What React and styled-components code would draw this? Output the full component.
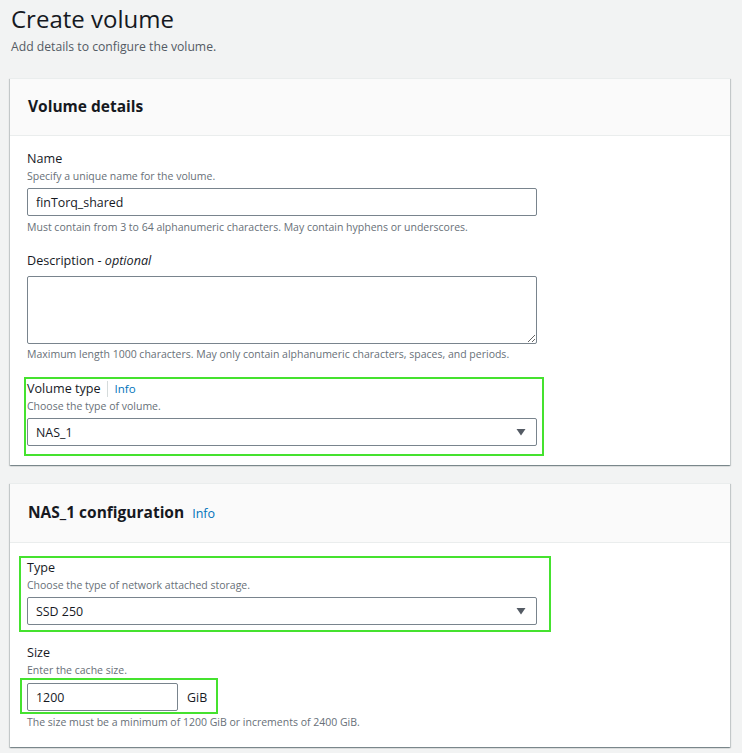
import React from "react";
import styled, { createGlobalStyle } from "styled-components";

const GlobalStyle = createGlobalStyle`
  html, body {
    margin: 0;
    padding: 0;
    background: #f2f3f3;
    font-family: "Open Sans", "Noto Sans", sans-serif;
    color: #16191f;
  }
  * { box-sizing: border-box; }
`;

const Page = styled.div`
  padding: 2px 12px 10px 10px;
`;

const Title = styled.h1`
  margin: 0 0 0 1px;
  font-size: 24px;
  font-weight: 400;
  line-height: 34px;
  color: #16191f;
`;

const Subtitle = styled.p`
  margin: 1px 0 0 1px;
  font-size: 12.2px;
  line-height: 20px;
  color: #545b64;
`;

const Card = styled.section`
  margin-top: ${(p) => p.$top || 0}px;
  background: #fff;
  border-top: 1px solid #eaeded;
  box-shadow: 0 1px 1px 0 rgba(0, 28, 36, 0.3),
    1px 1px 1px 0 rgba(0, 28, 36, 0.15), -1px 1px 1px 0 rgba(0, 28, 36, 0.15);
`;

const CardHeader = styled.header`
  display: flex;
  align-items: baseline;
  gap: 8px;
  height: ${(p) => p.$height || 57}px;
  padding: ${(p) => (p.$height ? 17 : 16)}px 18px 0;
  background: #fafafa;
  border-bottom: 1px solid #eaeded;
`;

const CardTitle = styled.h2`
  margin: 0;
  font-size: 15.5px;
  font-weight: 700;
  line-height: 22px;
`;

const CardBody = styled.div`
  display: flex;
  flex-direction: column;
  gap: ${(p) => p.$gap}px;
  padding: ${(p) => p.$pad};
`;

const Field = styled.div`
  display: flex;
  flex-direction: column;
`;

const Highlight = styled.div`
  align-self: flex-start;
  width: ${(p) => (p.$width ? `${p.$width}px` : "auto")};
  margin: ${(p) => p.$margin};
  padding: ${(p) => p.$padding};
  border: 2px solid #45e22f;
`;

const LabelRow = styled.div`
  display: flex;
  align-items: center;
  font-size: 12.6px;
  line-height: 19px;
  color: #16191f;
  em { font-style: italic; }
`;

const InfoLink = styled.a`
  font-size: ${(p) => (p.$divided ? 11.5 : 12.5)}px;
  color: #0073bb;
  text-decoration: none;
  ${(p) =>
    p.$divided &&
    `
    margin-left: 6px;
    padding-left: 7px;
    border-left: 1px solid #d5dbdb;
    line-height: 16px;
  `}
`;

const Hint = styled.div`
  font-size: 10.5px;
  line-height: 16px;
  color: #687078;
  margin-top: ${(p) => p.$top || 0}px;
`;

const TextInput = styled.input`
  display: block;
  margin-top: ${(p) => (p.$flush ? 0 : 4)}px;
  width: ${(p) => p.$width || 510}px;
  height: 28px;
  padding: 0 8px;
  border: 1px solid #79848d;
  border-radius: 2px;
  font-family: inherit;
  font-size: 12.4px;
  color: #16191f;
  background: #fff;
  outline: none;
`;

const TextArea = styled.textarea`
  display: block;
  margin-top: 6px;
  width: 510px;
  height: 68px;
  padding: 4px 8px;
  border: 1px solid #79848d;
  border-radius: 2px;
  font-family: inherit;
  font-size: 12.4px;
  background: #fff;
  outline: none;
`;

const SelectBox = styled.div`
  display: flex;
  align-items: center;
  justify-content: space-between;
  margin-top: 4px;
  width: 510px;
  height: 28px;
  padding: 0 10px 0 8px;
  border: 1px solid #79848d;
  border-radius: 2px;
  background: #fff;
  font-size: 12.4px;
  color: #16191f;
`;

const InputRow = styled.div`
  display: flex;
  align-items: center;
  gap: 9px;
`;

const Unit = styled.span`
  font-size: 12.4px;
  color: #16191f;
  margin-top: 1px;
`;

const Caret = () => (
  <svg width="10" height="8" viewBox="0 0 10 8" aria-hidden="true">
    <path d="M0.5 1 H9.5 L5 7.5 Z" fill="#545b64" />
  </svg>
);

export default function App() {
  return (
    <>
      <GlobalStyle />
      <Page>
        <Title>Create volume</Title>
        <Subtitle>Add details to configure the volume.</Subtitle>

        <Card $top={21}>
          <CardHeader>
            <CardTitle>Volume details</CardTitle>
          </CardHeader>
          <CardBody $gap={15.5} $pad="13px 18px 9px 17px">
            <Field>
              <LabelRow>Name</LabelRow>
              <Hint>Specify a unique name for the volume.</Hint>
              <TextInput defaultValue="finTorq_shared" />
              <Hint $top={3}>
                Must contain from 3 to 64 alphanumeric characters. May contain
                hyphens or underscores.
              </Hint>
            </Field>
            <Field>
              <LabelRow>
                Description -&nbsp;<em>optional</em>
              </LabelRow>
              <TextArea />
              <Hint $top={2}>
                Maximum length 1000 characters. May only contain alphanumeric
                characters, spaces, and periods.
              </Hint>
            </Field>
            <Highlight $margin="0 0 0 -3px" $padding="0 5px 8px 1px">
              <Field>
                <LabelRow>
                  Volume type
                  <InfoLink $divided href="#">Info</InfoLink>
                </LabelRow>
                <Hint>Choose the type of volume.</Hint>
                <SelectBox>
                  <span>NAS_1</span>
                  <Caret />
                </SelectBox>
              </Field>
            </Highlight>
          </CardBody>
        </Card>

        <Card $top={18}>
          <CardHeader $height={59}>
            <CardTitle>NAS_1 configuration</CardTitle>
            <InfoLink href="#">Info</InfoLink>
          </CardHeader>
          <CardBody $gap={11} $pad="13px 18px 17px 17px">
            <Highlight $margin="0 0 0 -8px" $padding="0 12px 5px 6px">
              <Field>
                <LabelRow>Type</LabelRow>
                <Hint>Choose the type of network attached storage.</Hint>
                <SelectBox>
                  <span>SSD 250</span>
                  <Caret />
                </SelectBox>
              </Field>
            </Highlight>
            <Field>
              <LabelRow>Size</LabelRow>
              <Hint>Enter the cache size.</Hint>
              <Highlight $width={198} $margin="0 0 0 -7px" $padding="3px 0 1px 5px">
                <InputRow>
                  <TextInput $flush $width={151} defaultValue="1200" />
                  <Unit>GiB</Unit>
                </InputRow>
              </Highlight>
              <Hint>
                The size must be a minimum of 1200 GiB or increments of 2400
                GiB.
              </Hint>
            </Field>
          </CardBody>
        </Card>
      </Page>
    </>
  );
}
